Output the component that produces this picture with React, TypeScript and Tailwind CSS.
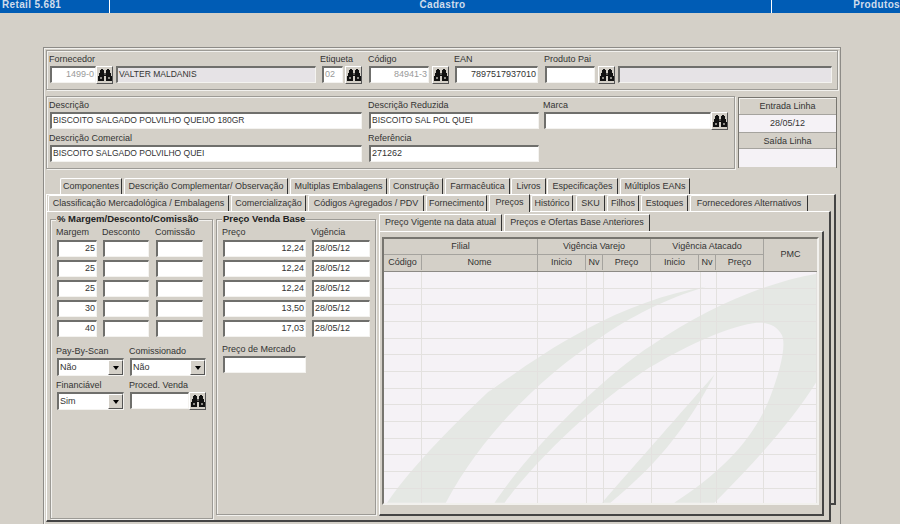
import React from 'react';

const sunken = "border-2 border-t-[#6f6f6c] border-l-[#6f6f6c] border-b-[#f4f3f0] border-r-[#f4f3f0] border-b-1 border-r-1";
const raised = "border border-t-white border-l-white border-b-[#555] border-r-[#555]";
const groove = "border border-[#9c9a95] shadow-[inset_1px_1px_0_#f2f1ee,1px_1px_0_#f2f1ee]";

const Input: React.FC<{ w: number; value?: string; right?: boolean; bg?: string; muted?: boolean; caps?: boolean }> = ({ w, value, right, bg, muted, caps }) => (
  <div
    style={{ width: w }}
    className={`h-[17px] shrink-0 px-[1px] leading-[13px] whitespace-nowrap overflow-hidden ${sunken} ${right ? 'text-right' : ''} ${bg ?? 'bg-white'} ${muted ? 'text-[#9a9a9a]' : ''} ${caps ? 'text-[8.5px]' : ''}`}
  >
    {value}
  </div>
);

// binoculars, drawn to the same blocky shape as the old toolbar glyph
const Binoculars: React.FC = () => (
  <svg width="14" height="12" viewBox="0 0 14 12" shapeRendering="crispEdges">
    <path fill="#111" d="M3 0H5V1H6V4H8V1H9V0H11V1H12V4H13V7H14V12H8V7H6V12H0V7H1V4H2V1H3Z" />
    <path fill="#d4d0c8" d="M6 4H8V6H6Z" opacity="0.35" />
    <path fill="#8c8a85" d="M2 8H4V10H2ZM10 8H12V10H10Z" />
  </svg>
);

const Search: React.FC = () => (
  <div className={`w-[17px] h-[18px] shrink-0 flex items-center justify-center bg-[#d4d0c8] ${raised}`}>
    <Binoculars />
  </div>
);

const Label: React.FC<{ text: string }> = ({ text }) => (
  <div className="h-[12px] leading-[11px] -ml-[1px] whitespace-nowrap">{text}</div>
);

const Select: React.FC<{ w: number; value: string }> = ({ w, value }) => (
  <div style={{ width: w }} className={`h-[18px] flex items-center justify-between bg-white ${sunken}`}>
    <span className="pl-[1px] leading-[13px]">{value}</span>
    <div className={`w-[15px] h-[15px] flex items-center justify-center bg-[#d4d0c8] ${raised}`}>
      <div className="border-x-[3.5px] border-x-transparent border-t-[4px] border-t-black" />
    </div>
  </div>
);

const topTabs = [
  { label: 'Componentes', w: 62, ml: 14 },
  { label: 'Descrição Complementar/ Observação', w: 164, ml: 2 },
  { label: 'Multiplas Embalagens', w: 97, ml: 2 },
  { label: 'Construção', w: 54, ml: 2 },
  { label: 'Farmacêutica', w: 65, ml: 2 },
  { label: 'Livros', w: 35, ml: 1 },
  { label: 'Especificações', w: 71, ml: 1 },
  { label: 'Múltiplos EANs', w: 70, ml: 2 },
];

const bottomTabs = [
  { label: 'Classificação Mercadológica / Embalagens', w: 181, ml: 1 },
  { label: 'Comercialização', w: 75, ml: 2 },
  { label: 'Códigos Agregados / PDV', w: 116, ml: 2 },
  { label: 'Fornecimento', w: 61, ml: 2 },
  { label: 'Preços', w: 41, ml: 2, active: true },
  { label: 'Histórico', w: 42, ml: 1 },
  { label: 'SKU', w: 29, ml: 3 },
  { label: 'Filhos', w: 32, ml: 2 },
  { label: 'Estoques', w: 47, ml: 2 },
  { label: 'Fornecedores Alternativos', w: 118, ml: 2 },
];

const Tab: React.FC<{ label: string; w: number; ml: number; active?: boolean }> = ({ label, w, ml, active }) => (
  <div
    style={{ width: w, marginLeft: ml }}
    className={`relative shrink-0 text-center whitespace-nowrap border-t border-l border-t-white border-l-white border-r border-r-[#333] rounded-tl-[2px] bg-[#d4d0c8] ${active ? 'h-[18px] -mt-[1px] leading-[15px] z-10' : 'h-[16px] leading-[14px]'}`}
  >
    {label}
  </div>
);

const margins = ['25', '25', '25', '30', '40'];
const prices = ['12,24', '12,24', '12,24', '13,50', '17,03'];

const columns = [38, 116, 49, 17, 48, 49, 16, 47, 53];

const App: React.FC = () => {
  return (
    <div className="w-[900px] h-[524px] overflow-hidden bg-[#d4d0c8] text-[9px] text-[#333] font-['Liberation_Sans',sans-serif]">
      {/* title bar */}
      <div className="h-[13px] flex bg-[#005cb5] text-[#cfdcec] font-bold text-[10px] tracking-[0.35px] leading-[10px]">
        <div className="w-[110px] pl-[2px] border-r border-r-white">Retail 5.681</div>
        <div className="w-[662px] pl-[4px] text-center border-r border-r-white">Cadastro</div>
        <div className="flex-1 text-right whitespace-nowrap">Produtos</div>
      </div>

      {/* window */}
      <div className="ml-[43px] mt-[34px] w-[798px] h-[490px] border border-[#8d8b87] shadow-[inset_1px_1px_0_#f2f1ee] pl-[2px] pt-[2px]">
        {/* supplier group */}
        <div className={`w-[792px] h-[40px] pl-[3px] pt-[3px] flex ${groove}`}>
          <div>
            <Label text="Fornecedor" />
            <div className="flex items-start">
              <Input w={46} value="1499-0" right muted />
              <Search />
              <div className="ml-[3px]"><Input w={200} value="VALTER MALDANIS" bg="bg-[#e6e3e6]" caps /></div>
            </div>
          </div>
          <div className="ml-[5px]">
            <Label text="Etiqueta" />
            <div className="flex items-start ml-[1px]">
              <Input w={21} value="02" muted />
              <div className="ml-[2px]"><Search /></div>
            </div>
          </div>
          <div className="ml-[7px]">
            <Label text="Código" />
            <div className="flex items-start">
              <Input w={60} value="84941-3" right muted />
              <div className="ml-[3px]"><Search /></div>
            </div>
          </div>
          <div className="ml-[6px]">
            <Label text="EAN" />
            <Input w={83} value="7897517937010" right />
          </div>
          <div className="ml-[7px]">
            <Label text="Produto Pai" />
            <div className="flex items-start">
              <Input w={50} />
              <div className="ml-[3px]"><Search /></div>
              <div className="ml-[3px]"><Input w={214} bg="bg-[#e6e3e6]" /></div>
            </div>
          </div>
        </div>

        <div className="flex mt-[6px]">
          {/* description group */}
          <div className={`w-[689px] h-[73px] pl-[3px] pt-[3px] flex ${groove}`}>
            <div className="w-[319px]">
              <Label text="Descrição" />
              <Input w={312} value="BISCOITO SALGADO POLVILHO QUEIJO 180GR" caps />
              <div className="mt-[4px]"><Label text="Descrição Comercial" /></div>
              <Input w={312} value="BISCOITO SALGADO POLVILHO QUEI" caps />
            </div>
            <div className="w-[175px]">
              <Label text="Descrição Reduzida" />
              <Input w={170} value="BISCOITO SAL POL QUEI" caps />
              <div className="mt-[4px]"><Label text="Referência" /></div>
              <Input w={170} value="271262" />
            </div>
            <div>
              <Label text="Marca" />
              <div className="flex items-start">
                <Input w={167} />
                <Search />
              </div>
            </div>
          </div>
          {/* line dates */}
          <div className="ml-[3px] mt-[1px] w-[99px] h-[71px] border border-[#77756f] border-b-0 text-center leading-[16px]">
            <div className="h-[17px] border-b border-[#a5a39e] shadow-[inset_1px_1px_0_#f2f1ee]">Entrada Linha</div>
            <div className="h-[17px] bg-[#f5f2f6]">28/05/12</div>
            <div className="h-[17px] border-y border-[#a5a39e]">Saída Linha</div>
            <div className="h-[18px] bg-[#f5f2f6]" />
          </div>
        </div>

        {/* tab stack */}
        <div className="flex h-[16px] mt-[9px]">
          {topTabs.map((t) => <Tab key={t.label} {...t} />)}
        </div>
        <div className="w-[790px] h-[311px] border-r-2 border-b-2 border-r-[#444] border-b-[#444] border-t border-t-white border-l border-l-white">
          <div className="flex h-[16px]">
            {bottomTabs.map((t) => <Tab key={t.label} {...t} />)}
          </div>
          <div className="relative w-[785px] h-[311px] bg-[#d4d0c8] border-t border-t-white border-l border-l-white border-r-2 border-r-[#444] border-b-2 border-b-[#444] -ml-[1px] flex items-start pl-[3px] pt-[7px]">
            {/* margin group */}
            <div className={`relative w-[163px] h-[300px] pl-[6px] pt-[7px] shrink-0 ${groove}`}>
              <div className="absolute -top-[7px] left-[5px] px-[1px] bg-[#d4d0c8] font-bold text-[9.5px] text-[#222] leading-[11px] whitespace-nowrap">% Margem/Desconto/Comissão</div>
              <div className="grid grid-cols-[46px_53px_47px] mb-[1px]">
                <Label text="Margem" />
                <Label text="Desconto" />
                <Label text="Comissão" />
              </div>
              <div className="grid grid-cols-[46px_53px_47px] gap-y-[3px]">
                {margins.map((m, i) => (
                  <React.Fragment key={i}>
                    <Input w={40} value={m} right />
                    <Input w={46} />
                    <Input w={47} />
                  </React.Fragment>
                ))}
              </div>
              <div className="flex mt-[9px]">
                <div className="w-[73px]">
                  <Label text="Pay-By-Scan" />
                  <Select w={67} value="Não" />
                </div>
                <div>
                  <Label text="Comissionado" />
                  <Select w={76} value="Não" />
                </div>
              </div>
              <div className="flex mt-[4px]">
                <div className="w-[73px]">
                  <Label text="Financiável" />
                  <Select w={67} value="Sim" />
                </div>
                <div>
                  <Label text="Proced. Venda" />
                  <div className="flex items-start">
                    <Input w={59} />
                    <Search />
                  </div>
                </div>
              </div>
            </div>

            {/* price group */}
            <div className={`relative ml-[3px] w-[160px] h-[296px] pl-[6px] pt-[7px] shrink-0 ${groove}`}>
              <div className="absolute -top-[7px] left-[5px] px-[1px] bg-[#d4d0c8] font-bold text-[9.5px] text-[#222] leading-[11px] whitespace-nowrap">Preço Venda Base</div>
              <div className="grid grid-cols-[89px_58px] mb-[1px]">
                <Label text="Preço" />
                <Label text="Vigência" />
              </div>
              <div className="grid grid-cols-[89px_58px] gap-y-[3px]">
                {prices.map((p, i) => (
                  <React.Fragment key={i}>
                    <Input w={83} value={p} right />
                    <Input w={58} value="28/05/12" />
                  </React.Fragment>
                ))}
              </div>
              <div className="mt-[7px]">
                <Label text="Preço de Mercado" />
                <Input w={83} />
              </div>
            </div>

            {/* price table tabs */}
            <div className="ml-[3px] -mt-[5px] shrink-0">
              <div className="flex h-[17px]">
                <div className="w-[123px] text-center leading-[15px] whitespace-nowrap border-t border-l border-t-white border-l-white border-r border-r-[#333]">Preço Vigente na data atual</div>
                <div className="ml-[2px] w-[146px] text-center leading-[15px] whitespace-nowrap border-t border-l border-t-white border-l-white border-r border-r-[#333]">Preços e Ofertas Base Anteriores</div>
              </div>
              <div className="w-[445px] h-[285px] border-t border-l border-t-white border-l-white border-r-2 border-b-2 border-r-[#444] border-b-[#444] pl-[2px] pt-[5px]">
                <div className="w-[437px] h-[268px] border-2 border-[#77756f] border-r-[#f2f1ee] border-b-[#f2f1ee] bg-[#f5f2f6] flex flex-col overflow-hidden">
                  <div className="h-[33px] flex shrink-0 border-b border-[#8c8a85] bg-[#d4d0c8] text-center">
                    <div className="w-[154px] shrink-0 border-r border-[#a5a39e]">
                      <div className="h-[16px] border-b border-[#a5a39e] leading-[15px]">Filial</div>
                      <div className="flex leading-[15px]">
                        <div className="w-[38px] border-r border-[#a5a39e]">Código</div>
                        <div className="flex-1">Nome</div>
                      </div>
                    </div>
                    {['Vigência Varejo', 'Vigência Atacado'].map((group) => (
                      <div key={group} className="w-[113px] shrink-0 border-r border-[#a5a39e]">
                        <div className="h-[16px] border-b border-[#a5a39e] leading-[15px]">{group}</div>
                        <div className="flex leading-[15px]">
                          <div className="w-[48px] border-r border-[#a5a39e]">Inicio</div>
                          <div className="w-[17px] border-r border-[#a5a39e]">Nv</div>
                          <div className="flex-1">Preço</div>
                        </div>
                      </div>
                    ))}
                    <div className="flex-1 flex items-center justify-center">PMC</div>
                  </div>
                  <div className="relative flex-1">
                    <svg className="absolute inset-0 w-full h-full" viewBox="41 30 1289 699" preserveAspectRatio="none">
                      <path fill="#e5e8e4" d="M50 728C130 610 250 490 390 355L350 395C440 330 520 270 640 205C760 140 880 95 1000 75C880 110 770 170 690 225C520 340 340 510 225 728Z" />
                      <path fill="#e5e8e4" d="M370 728C480 560 700 340 840 250C1000 140 1180 60 1330 35L1330 360C1250 490 1140 610 1025 728L905 728C1040 640 1140 540 1190 410C1220 330 1240 250 1225 220C1210 190 1180 180 1140 185C1050 200 930 260 830 320C680 420 500 590 400 728Z" />
                      <path fill="#e5e8e4" d="M690 728C800 600 930 450 1025 340C960 470 870 600 715 728Z" />
                    </svg>
                    <div className="relative h-full flex">
                      {columns.map((w, i) => (
                        <div key={i} style={{ width: w }} className="h-full shrink-0 border-r border-[#e3e1df]" />
                      ))}
                    </div>
                    <div className="absolute inset-0 flex flex-col">
                      {Array.from({ length: 14 }).map((_, i) => (
                        <div key={i} className="h-[16.67px] shrink-0 border-b border-[#e3e1df]" />
                      ))}
                    </div>
                  </div>
                </div>
              </div>
            </div>
          </div>
        </div>
      </div>
    </div>
  );
};

export default App;
